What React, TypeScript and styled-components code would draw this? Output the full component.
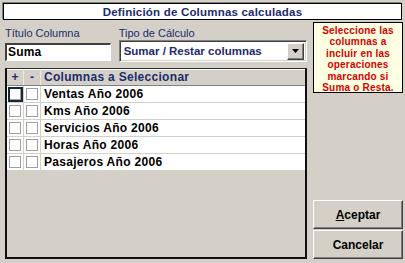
import React from 'react';
import styled, { createGlobalStyle } from 'styled-components';

const GlobalStyle = createGlobalStyle`
  html, body {
    margin: 0;
    padding: 0;
    background: #d4d0c8;
  }
  * {
    box-sizing: border-box;
  }
`;

const NAVY = '#1c2b6b';

const Dialog = styled.div`
  width: 405px;
  height: 263px;
  background: #d4d0c8;
  font-family: 'Liberation Sans', Arial, sans-serif;
  font-size: 12px;
  display: flex;
  flex-direction: column;
  overflow: hidden;
`;

const TitleBar = styled.div`
  margin: 3px 3px 0 3px;
  height: 17px;
  background: #fff;
  border: 1px solid #000;
  box-shadow: -1px -1px 0 #808080;
  color: ${NAVY};
  font-weight: bold;
  font-size: 11.5px;
  letter-spacing: 0.2px;
  display: flex;
  align-items: center;
  justify-content: center;
`;

const Body = styled.div`
  flex: 1;
  display: flex;
  padding: 0 2px 4px 5px;
  gap: 6px;
`;

const LeftCol = styled.div`
  width: 302px;
  display: flex;
  flex-direction: column;
`;

const RightCol = styled.div`
  flex: 1;
  display: flex;
  flex-direction: column;
  padding-top: 2px;
`;

const FieldRow = styled.div`
  display: flex;
  gap: 8px;
  padding-top: 6px;
  height: 48px;
`;

const Field = styled.div<{ $w: number }>`
  width: ${(p) => p.$w}px;
  display: flex;
  flex-direction: column;
`;

const Label = styled.label<{ $gap: number }>`
  color: ${NAVY};
  font-size: 11px;
  height: 14px;
  line-height: 14px;
  margin-bottom: ${(p) => p.$gap}px;
`;

const TextBox = styled.div`
  height: 18px;
  background: #fff;
  border-top: 2px solid #404040;
  border-left: 2px solid #404040;
  border-right: 1px solid #fff;
  border-bottom: 1px solid #fff;
  box-shadow: 1px 1px 0 #d4d0c8;
  font-weight: bold;
  color: #000;
  padding-left: 1px;
  line-height: 15px;
  letter-spacing: 0.2px;
`;

const Select = styled.div`
  height: 22px;
  background: #fff;
  border-top: 1px solid #808080;
  border-left: 1px solid #808080;
  border-right: 1px solid #fff;
  border-bottom: 1px solid #fff;
  box-shadow: inset 1px 1px 0 #404040, inset -1px -1px 0 #d4d0c8;
  display: flex;
  align-items: center;
  padding: 2px;
`;

const SelectText = styled.div`
  flex: 1;
  color: ${NAVY};
  font-weight: bold;
  font-size: 11.5px;
  padding-left: 2px;
`;

const DropButton = styled.div`
  width: 17px;
  height: 17px;
  background: #d4d0c8;
  border-top: 1px solid #fff;
  border-left: 1px solid #fff;
  border-right: 1px solid #404040;
  border-bottom: 1px solid #404040;
  box-shadow: inset -1px -1px 0 #808080;
  display: flex;
  align-items: center;
  justify-content: center;
`;

const Grid = styled.div`
  flex: 1;
  border: 2px solid #101010;
  border-top: 1px solid #303030;
  background: #d4d0c8;
  display: flex;
  flex-direction: column;
`;

const GridRow = styled.div<{ $header?: boolean }>`
  display: grid;
  grid-template-columns: 17px 17px 1fr;
  height: 17px;
  background: ${(p) => (p.$header ? '#d4d0c8' : '#fff')};
  border-bottom: 1px solid ${(p) => (p.$header ? '#808080' : '#d4d0c8')};
  box-shadow: ${(p) => (p.$header ? 'inset 0 1px 0 #fff' : 'none')};
`;

const Cell = styled.div<{ $header?: boolean; $last?: boolean }>`
  display: flex;
  align-items: center;
  justify-content: ${(p) => (p.$last ? 'flex-start' : 'center')};
  padding-left: ${(p) => (p.$last ? '3px' : '0')};
  border-right: ${(p) => (p.$last ? 'none' : `1px solid ${p.$header ? '#ece9e2' : '#d4d0c8'}`)};
  color: ${(p) => (p.$header ? NAVY : '#000')};
  font-weight: bold;
  font-size: 12px;
  letter-spacing: ${(p) => (p.$last ? '0.3px' : '0')};
  position: relative;
`;

const Check = styled.div`
  width: 12px;
  height: 12px;
  background: #fff;
  border: 1px solid #a0a0a0;
`;

const Focus = styled.div`
  position: absolute;
  inset: 1px 0 0 1px;
  border: 2px solid #1a2540;
`;

const Note = styled.div`
  height: 71px;
  background: #ffffe1;
  border: 1px solid #000;
  color: #d40000;
  font-weight: bold;
  font-size: 10px;
  line-height: 11.4px;
  letter-spacing: 0.2px;
  text-align: center;
  padding: 2px 2px 0;
`;

const Spacer = styled.div`
  flex: 1;
`;

const Button = styled.button`
  height: 29px;
  margin-top: 1px;
  width: 100%;
  background: #d4d0c8;
  border-top: 1px solid #fff;
  border-left: 1px solid #fff;
  border-right: 1px solid #404040;
  border-bottom: 1px solid #404040;
  box-shadow: inset -1px -1px 0 #808080;
  font-family: 'Liberation Sans', Arial, sans-serif;
  font-weight: bold;
  font-size: 12px;
  color: #000;
  padding: 0;

  u {
    text-decoration: underline;
  }
`;

const rows = [
  'Ventas Año 2006',
  'Kms Año 2006',
  'Servicios Año 2006',
  'Horas Año 2006',
  'Pasajeros Año 2006',
];

export default function App() {
  return (
    <>
      <GlobalStyle />
      <Dialog>
        <TitleBar>Definición de Columnas calculadas</TitleBar>
        <Body>
          <LeftCol>
            <FieldRow>
              <Field $w={106}>
                <Label $gap={3}>Título Columna</Label>
                <TextBox>Suma</TextBox>
              </Field>
              <Field $w={189}>
                <Label $gap={0}>Tipo de Cálculo</Label>
                <Select>
                  <SelectText>Sumar / Restar columnas</SelectText>
                  <DropButton>
                    <svg width="7" height="4" viewBox="0 0 7 4">
                      <path d="M0 0h7L3.5 4z" fill="#000" />
                    </svg>
                  </DropButton>
                </Select>
              </Field>
            </FieldRow>
            <Grid>
              <GridRow $header>
                <Cell $header>+</Cell>
                <Cell $header>-</Cell>
                <Cell $header $last>Columnas a Seleccionar</Cell>
              </GridRow>
              {rows.map((r, i) => (
                <GridRow key={r}>
                  <Cell>
                    <Check />
                    {i === 0 && <Focus />}
                  </Cell>
                  <Cell>
                    <Check />
                  </Cell>
                  <Cell $last>{r}</Cell>
                </GridRow>
              ))}
            </Grid>
          </LeftCol>
          <RightCol>
            <Note>
              Seleccione las columnas a incluir en las operaciones marcando si Suma o Resta.
            </Note>
            <Spacer />
            <Button>
              <u>A</u>ceptar
            </Button>
            <Button>Cancelar</Button>
          </RightCol>
        </Body>
      </Dialog>
    </>
  );
}
